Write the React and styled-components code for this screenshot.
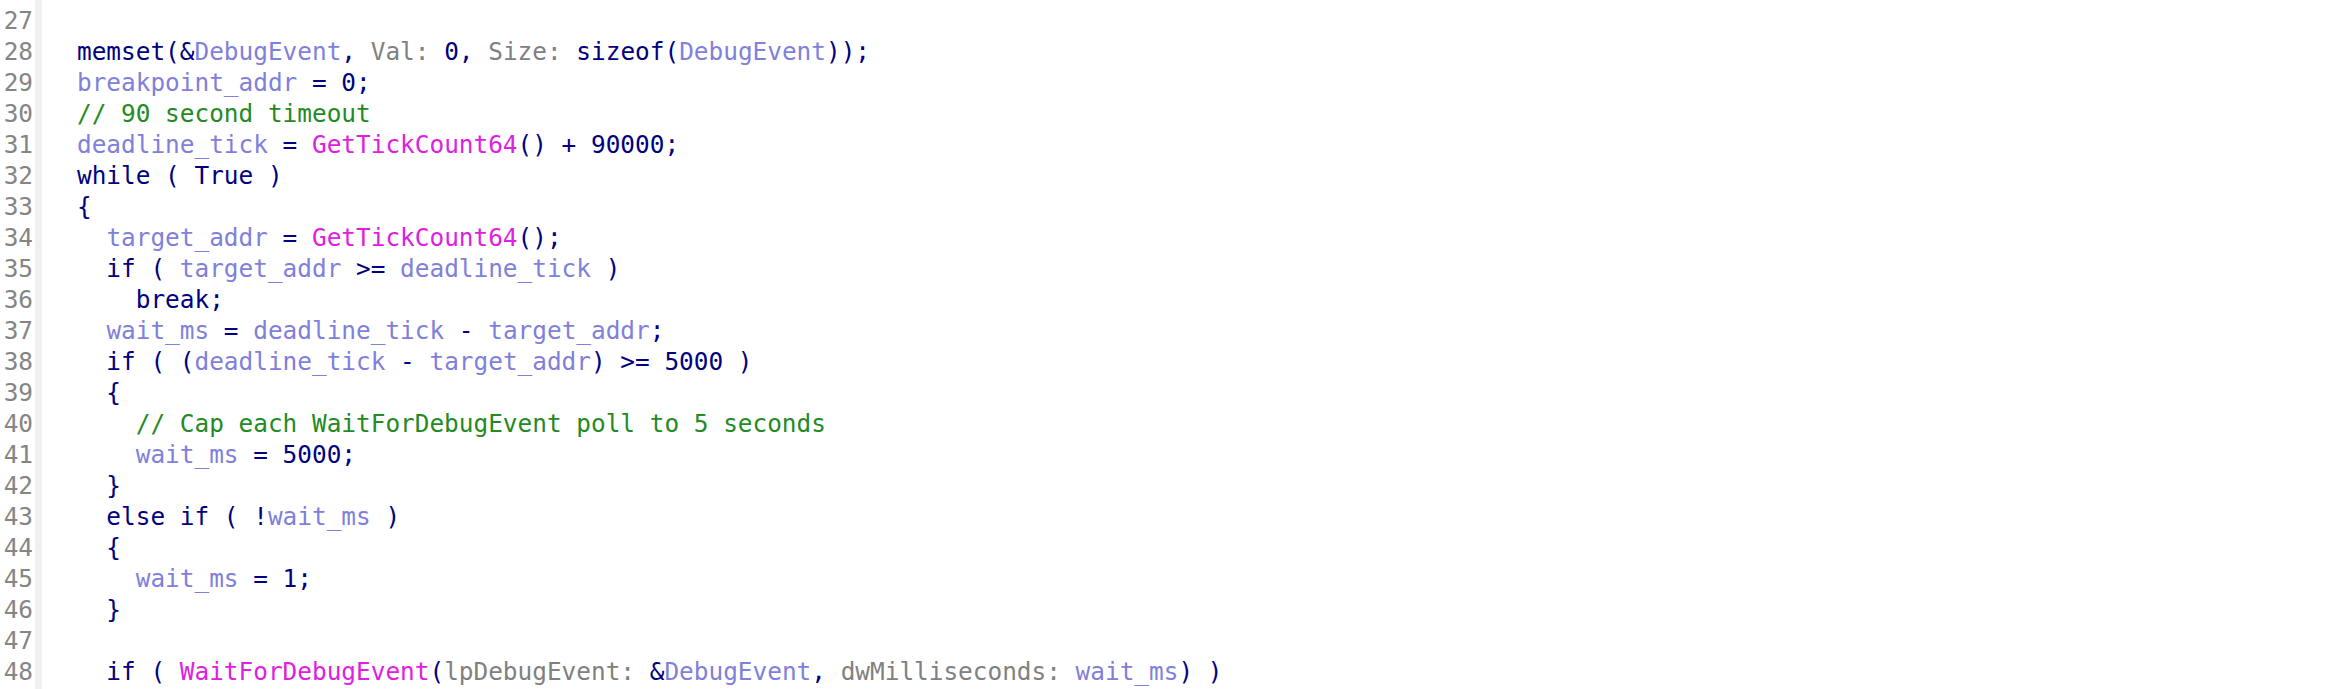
import styled, { createGlobalStyle } from "styled-components";

const GlobalStyle = createGlobalStyle`
  html, body {
    margin: 0;
    padding: 0;
    background: #ffffff;
  }
`;

const Editor = styled.div`
  min-height: 100vh;
  padding-top: 5px;
  box-sizing: border-box;
  font-family: "DejaVu Sans Mono", "Liberation Mono", monospace;
  font-size: 24.4px;
  background: linear-gradient(
    to right,
    transparent 35px,
    #f0f0f0 35px,
    #f0f0f0 42px,
    transparent 42px
  );
`;

const Line = styled.div`
  display: flex;
  height: 31px;
  line-height: 31px;
`;

const LineNo = styled.span`
  width: 33px;
  text-align: right;
  color: #858585;
  flex-shrink: 0;
`;

const Code = styled.span`
  padding-left: 44px;
  white-space: pre;
  color: #000080;
`;

const colors = {
  k: "#000080",
  v: "#7f7fdc",
  f: "#e020e0",
  c: "#248a24",
  p: "#808080",
};

const Tok = styled.span`
  color: ${(p) => colors[p.$kind]};
`;

const lines = [
  [],
  [
    ["k", "memset(&"],
    ["v", "DebugEvent"],
    ["k", ", "],
    ["p", "Val:"],
    ["k", " 0, "],
    ["p", "Size:"],
    ["k", " sizeof("],
    ["v", "DebugEvent"],
    ["k", "));"],
  ],
  [["v", "breakpoint_addr"], ["k", " = 0;"]],
  [["c", "// 90 second timeout"]],
  [
    ["v", "deadline_tick"],
    ["k", " = "],
    ["f", "GetTickCount64"],
    ["k", "() + 90000;"],
  ],
  [["k", "while ( True )"]],
  [["k", "{"]],
  [["k", "  "], ["v", "target_addr"], ["k", " = "], ["f", "GetTickCount64"], ["k", "();"]],
  [
    ["k", "  if ( "],
    ["v", "target_addr"],
    ["k", " >= "],
    ["v", "deadline_tick"],
    ["k", " )"],
  ],
  [["k", "    break;"]],
  [
    ["k", "  "],
    ["v", "wait_ms"],
    ["k", " = "],
    ["v", "deadline_tick"],
    ["k", " - "],
    ["v", "target_addr"],
    ["k", ";"],
  ],
  [
    ["k", "  if ( ("],
    ["v", "deadline_tick"],
    ["k", " - "],
    ["v", "target_addr"],
    ["k", ") >= 5000 )"],
  ],
  [["k", "  {"]],
  [["k", "    "], ["c", "// Cap each WaitForDebugEvent poll to 5 seconds"]],
  [["k", "    "], ["v", "wait_ms"], ["k", " = 5000;"]],
  [["k", "  }"]],
  [["k", "  else if ( !"], ["v", "wait_ms"], ["k", " )"]],
  [["k", "  {"]],
  [["k", "    "], ["v", "wait_ms"], ["k", " = 1;"]],
  [["k", "  }"]],
  [],
  [
    ["k", "  if ( "],
    ["f", "WaitForDebugEvent"],
    ["k", "("],
    ["p", "lpDebugEvent:"],
    ["k", " &"],
    ["v", "DebugEvent"],
    ["k", ", "],
    ["p", "dwMilliseconds:"],
    ["k", " "],
    ["v", "wait_ms"],
    ["k", ") )"],
  ],
];

const App = () => {
  return (
    <>
      <GlobalStyle />
      <Editor>
        {lines.map((toks, i) => (
          <Line key={i}>
            <LineNo>{27 + i}</LineNo>
            <Code>
              {toks.map(([kind, text], j) => (
                <Tok key={j} $kind={kind}>
                  {text}
                </Tok>
              ))}
            </Code>
          </Line>
        ))}
      </Editor>
    </>
  );
};

export default App;
